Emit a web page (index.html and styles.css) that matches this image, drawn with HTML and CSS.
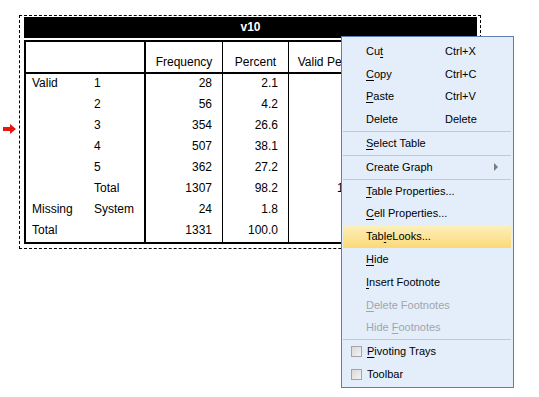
FILE: index.html
```html
<!DOCTYPE html>
<html>
<head>
<meta charset="utf-8">
<link rel="stylesheet" href="styles.css">
</head>
<body>
<div class="page">
  <svg class="marker" width="14" height="10" viewBox="0 0 14 10"><path d="M0 3h7V0l6 5-6 5V7H0z" fill="#e8150f"/></svg>
  <div class="selection">
    <div class="title">v10</div>
    <div class="grid">
      <div class="h c1"></div>
      <div class="h c2"></div>
      <div class="h num">Frequency</div>
      <div class="h num">Percent</div>
      <div class="h num">Valid Percent</div>
      <div class="h num last"></div>

      <div class="c1">Valid</div><div class="c2">1</div><div class="v">28</div><div class="v">2.1</div><div class="v">2.1</div><div class="v last"></div>
      <div class="c1"></div><div class="c2">2</div><div class="v">56</div><div class="v">4.2</div><div class="v">4.3</div><div class="v last"></div>
      <div class="c1"></div><div class="c2">3</div><div class="v">354</div><div class="v">26.6</div><div class="v">27.1</div><div class="v last"></div>
      <div class="c1"></div><div class="c2">4</div><div class="v">507</div><div class="v">38.1</div><div class="v">38.8</div><div class="v last"></div>
      <div class="c1"></div><div class="c2">5</div><div class="v">362</div><div class="v">27.2</div><div class="v">27.7</div><div class="v last"></div>
      <div class="c1"></div><div class="c2">Total</div><div class="v">1307</div><div class="v">98.2</div><div class="v">100.0</div><div class="v last"></div>
      <div class="c1">Missing</div><div class="c2">System</div><div class="v">24</div><div class="v">1.8</div><div class="v"></div><div class="v last"></div>
      <div class="c1">Total</div><div class="c2"></div><div class="v">1331</div><div class="v">100.0</div><div class="v"></div><div class="v last"></div>
    </div>
  </div>

  <div class="menu">
    <div class="item"><span>Cu<u>t</u></span><span>Ctrl+X</span></div>
    <div class="item"><span><u>C</u>opy</span><span>Ctrl+C</span></div>
    <div class="item"><span><u>P</u>aste</span><span>Ctrl+V</span></div>
    <div class="item"><span>Delete</span><span>Delete</span></div>
    <div class="sep"></div>
    <div class="item"><span><u>S</u>elect Table</span><span></span></div>
    <div class="sep"></div>
    <div class="item"><span>Create Graph</span><span class="arrow-cell"><i class="arrow"></i></span></div>
    <div class="sep"></div>
    <div class="item"><span><u>T</u>able Properties...</span><span></span></div>
    <div class="item"><span><u>C</u>ell Properties...</span><span></span></div>
    <div class="item hot"><span>Tab<u>l</u>eLooks...</span><span></span></div>
    <div class="item"><span><u>H</u>ide</span><span></span></div>
    <div class="item"><span><u>I</u>nsert Footnote</span><span></span></div>
    <div class="item off"><span><u>D</u>elete Footnotes</span><span></span></div>
    <div class="item off"><span>Hide <u>F</u>ootnotes</span><span></span></div>
    <div class="sep"></div>
    <div class="item check"><i class="box"></i><span><u>P</u>ivoting Trays</span></div>
    <div class="item check"><i class="box"></i><span>Toolbar</span></div>
  </div>
</div>
</body>
</html>
```

FILE: styles.css
```css
html, body {
  margin: 0;
  padding: 0;
  background: #fff;
}
.page {
  position: relative;
  width: 539px;
  height: 397px;
  padding: 15px 0 0 19px;
  box-sizing: border-box;
  font-family: "Liberation Sans", Arial, sans-serif;
  font-size: 12px;
  color: #000;
}
.marker {
  position: absolute;
  left: 3px;
  top: 124px;
}
.selection {
  width: 462px;
  border: 1px dashed #000;
  padding: 1px 0 4px 4px;
  box-sizing: border-box;
}
.title {
  width: 453px;
  height: 21px;
  background: #000;
  color: #fff;
  font-weight: bold;
  text-align: center;
  line-height: 21px;
  margin-bottom: 2px;
}
.grid {
  display: grid;
  width: 453px;
  box-sizing: border-box;
  border: 2px solid #000;
  grid-template-columns: 62px 58px 77px 66px 89px 97px;
  grid-auto-rows: 21px;
  grid-template-rows: 32px;
}
.grid > div {
  box-sizing: border-box;
  line-height: 14px;
  padding-top: 2px;
  white-space: nowrap;
}
.grid > .h {
  border-bottom: 2px solid #000;
  display: flex;
  align-items: flex-end;
  justify-content: center;
  text-align: center;
  padding: 0 4px 3px;
  white-space: normal;
}
.c1 {
  padding-left: 6px;
}
.c2 {
  padding-left: 6px;
  border-right: 2px solid #000;
}
.grid > .num {
  border-right: 1px solid #000;
}
.grid > .num.last {
  border-right: 0;
}
.v {
  text-align: right;
  padding-right: 10px;
  border-right: 1px solid #000;
}
.v.last {
  border-right: 0;
}

.menu {
  position: absolute;
  left: 341px;
  top: 36px;
  width: 173px;
  height: 352px;
  box-sizing: border-box;
  border: 1px solid #5b7fb4;
  background: #e4eefa;
  padding: 3px 2px 0 1px;
  font-size: 11px;
}
.item {
  height: 22.8px;
  display: grid;
  grid-template-columns: 79px auto;
  align-items: center;
  padding-left: 23px;
  line-height: 13px;
  white-space: nowrap;
}
.item u {
  text-decoration: underline;
  text-underline-offset: 2px;
}
.item.off {
  color: #a2a5aa;
}
.item.hot {
  background: linear-gradient(#fdf0bd, #fbd977);
}
.sep {
  height: 1px;
  background: #c3c9d1;
}
.arrow-cell {
  padding-left: 49px;
  display: flex;
  align-items: center;
}
.arrow {
  display: block;
  width: 0;
  height: 0;
  border-top: 4px solid transparent;
  border-bottom: 4px solid transparent;
  border-left: 4px solid #7a7a7a;
}
.item.check {
  display: flex;
  padding-left: 8px;
}
.box {
  display: block;
  width: 9px;
  height: 9px;
  border: 1px solid #a4a4a4;
  background: linear-gradient(135deg, #d8d8d8, #f4f4f4);
  margin-right: 5px;
}
```
